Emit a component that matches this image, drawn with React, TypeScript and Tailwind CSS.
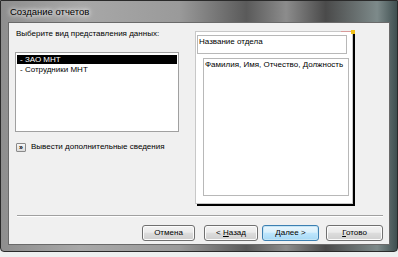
import React from 'react';

const font = { fontFamily: '"Liberation Sans", Arial, sans-serif' };

const DialogButton: React.FC<{ label: React.ReactNode; width: string; focused?: boolean }> = ({
  label,
  width,
  focused,
}) => (
  <button
    className={
      focused
        ? `${width} h-[16px] rounded-[3px] border border-[#3c7fb1] bg-[linear-gradient(#eaf6fd_0%,#d9f0fc_45%,#bee6fd_50%,#a7d9f5_100%)] text-[8px] leading-none text-black shadow-[inset_0_0_0_1px_#c4e5f6]`
        : `${width} h-[16px] rounded-[3px] border border-[#707070] bg-[linear-gradient(#f2f2f2_0%,#ebebeb_45%,#dddddd_50%,#cfcfcf_100%)] text-[8px] leading-none text-black shadow-[inset_0_0_0_1px_#fcfcfc]`
    }
  >
    {label}
  </button>
);

export default function App() {
  return (
    <div className="w-[398px] h-[257px] bg-[#eef0f0] overflow-hidden" style={font}>
      <div className="w-[398px] h-[252px] flex flex-col border border-[#2a2a2a] rounded-b-[4px] bg-[linear-gradient(90deg,#8e8e8e_0%,#a8a8a8_20%,#9a9a9a_45%,#5a5a5a_62%,#8c8c8c_72%,#4a4a4a_82%,#7d8a8a_95%,#3f4f50_100%)]">
        {/* title bar */}
        <div className="h-[21px] shrink-0 flex items-center pl-[9px] pt-[1px]">
          <span className="text-[9.5px] text-black [text-shadow:0_0_4px_#ffffff,0_0_6px_#ffffff]">
            Создание отчетов
          </span>
        </div>

        {/* client area */}
        <div className="mx-[7px] mb-[6px] flex-1 flex flex-col bg-[#f0f0f0] border border-[#6a6a6a]">
          <div className="flex pt-[5px] pl-[6px]">
            {/* left column */}
            <div className="w-[164px] flex flex-col">
              <div className="text-[8px] leading-[11px] text-black pl-[1px]">
                Выберите вид представления данных:
              </div>
              <div className="mt-[13px] h-[80px] bg-white border border-[#a0a0a0] pt-[2px] pl-[1px] pr-[1px]">
                <div className="h-[9px] bg-black text-white text-[8px] leading-[9px] pl-[3px]">- ЗАО МНТ</div>
                <div className="h-[10px] mt-[1px] text-black text-[8px] leading-[10px] pl-[3px]">
                  - Сотрудники МНТ
                </div>
              </div>
              <div className="mt-[9px] flex items-center gap-[5px] pl-[1px]">
                <div className="w-[10px] h-[9px] rounded-[1px] border border-[#8a8a8a] bg-[linear-gradient(#f6f6f6,#dcdcdc)] flex items-center justify-center text-[7px] leading-none font-bold text-black">
                  »
                </div>
                <span className="text-[8px] text-black">Вывести дополнительные сведения</span>
              </div>
            </div>

            {/* preview sheet */}
            <div className="relative ml-[16px] mt-[3px] w-[158px] h-[173px] bg-white border border-[#c8c8c8] shadow-[2px_2px_0_#000000]">
              <div className="absolute right-[-3px] top-[-2px] w-[4px] h-[4px] bg-[#f2c21a]" />
              <div className="absolute right-[1px] top-[-1px] w-[10px] h-[1px] bg-[#d89a9a]" />
              <div className="ml-[1px] mt-[3px] w-[150px] h-[19px] border border-[#b8b8b8] bg-white text-[8px] leading-[10px] text-black pl-[1px] pt-[1px]">
                Название отдела
              </div>
              <div className="ml-[7px] mt-[4px] w-[146px] h-[138px] border border-[#b8b8b8] bg-white text-[8px] leading-[10px] text-black pl-[1px] pt-[1px]">
                Фамилия, Имя, Отчество, Должность
              </div>
            </div>
          </div>

          <div className="flex-1" />
          <div className="ml-[8px] mr-[6px] h-[2px] border-t border-[#a0a0a0] border-b border-b-white" />
          <div className="flex justify-end pr-[6px] pt-[8px] pb-[3px]">
            <DialogButton label="Отмена" width="w-[53px]" />
            <div className="w-[9px]" />
            <DialogButton
              label={
                <>
                  &lt; <span className="underline">Н</span>азад
                </>
              }
              width="w-[54px]"
            />
            <div className="w-[4px]" />
            <DialogButton
              label={
                <>
                  <span className="underline">Д</span>алее &gt;
                </>
              }
              width="w-[57px]"
              focused
            />
            <div className="w-[7px]" />
            <DialogButton
              label={
                <>
                  <span className="underline">Г</span>отово
                </>
              }
              width="w-[57px]"
            />
          </div>
        </div>
      </div>
    </div>
  );
}
